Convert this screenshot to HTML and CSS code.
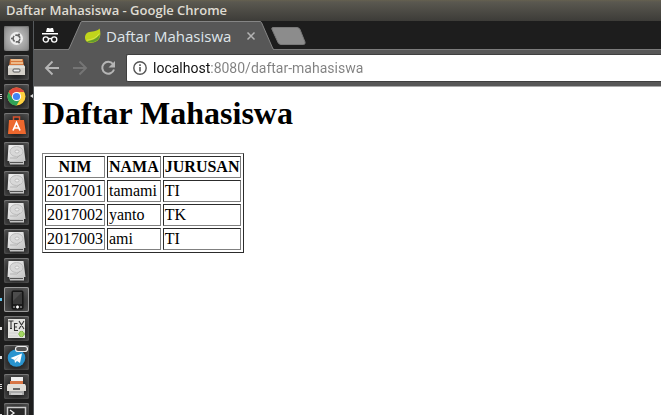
FILE: index.html
```html
<!DOCTYPE html>
<html lang="id">
<head>
<meta charset="utf-8">
<title>Daftar Mahasiswa</title>
<link rel="stylesheet" href="styles.css">
</head>
<body>
<svg class="defs" aria-hidden="true">
  <defs>
    <linearGradient id="metal" x1="0" y1="0" x2="1" y2="1"><stop offset="0" stop-color="#f2f2f2"/><stop offset="1" stop-color="#c4c4c4"/></linearGradient>
    <symbol id="disk" viewBox="0 0 25 25">
      <path d="M5 19h15v3.500H6z" fill="#c4c4c4"/><path d="M6 20.500h13" stroke="#555"/>
      <path d="M4.500 3h15l2 16H3.500z" fill="url(#metal)"/>
      <ellipse cx="12.500" cy="9.500" rx="6.500" ry="5" fill="#d8d8d8" stroke="#bebebe"/>
      <ellipse cx="13" cy="9.500" rx="2" ry="1.500" fill="#eee" stroke="#b0b0b0" stroke-width=".7"/>
      <path d="M6 16h7l3-3" fill="none" stroke="#b4b4b4"/>
    </symbol>
  </defs>
</svg>
<div class="desktop">
  <header class="titlebar">Daftar Mahasiswa - Google Chrome</header>
  <nav class="launcher" aria-label="Launcher">
    <button class="tile dash" aria-label="Dash"><svg viewBox="0 0 25 25"><circle cx="12.500" cy="12.500" r="6.500" fill="#eee"/><circle cx="12.500" cy="12.500" r="3.400" fill="none" stroke="#666" stroke-width="1.600" stroke-dasharray="6 1.120"/><g fill="#666"><circle cx="8" cy="12.500" r="1.100"/><circle cx="15" cy="8.500" r="1.100"/><circle cx="15" cy="16.500" r="1.100"/></g></svg></button>
    <button class="tile" aria-label="Files"><svg viewBox="0 0 25 25"><path d="M6 4h13l1 8H5z" fill="#d9783c"/><path d="M7 5h11M7 8h12" stroke="#f4d0a4" stroke-width="1.500"/><path d="M5 10h15l1 2v8H4v-8z" fill="#d4d0c9"/><path d="M4 12h17" stroke="#f5f3ee"/><rect x="9" y="14" width="7" height="3" rx="1" fill="#eee" stroke="#555"/></svg></button>
    <button class="tile run3 focused" aria-label="Google Chrome"><svg viewBox="0 0 25 25"><circle cx="12.500" cy="12.500" r="9" fill="#ffd140"/><path d="M4.700 8A9 9 0 0 1 20.300 8H12.500L8.600 14.750z" fill="#df4b3c"/><path d="M4.700 8A9 9 0 0 0 12.500 21.500L16.400 14.750H8.600z" fill="#30a257"/><circle cx="12.500" cy="12.500" r="4.600" fill="#fff"/><circle cx="12.500" cy="12.500" r="3.600" fill="#4285f4"/></svg></button>
    <button class="tile" aria-label="Software"><svg viewBox="0 0 25 25"><path d="M9.500 7V4h6v3" fill="none" stroke="#d8512c" stroke-width="1.500"/><path d="M5 7h15l2 14H4z" fill="#ed682e"/><path d="M9 17.500L12.500 9.500l3.500 8M10 15h5" fill="none" stroke="#fff" stroke-width="1.700"/></svg></button>
    <button class="tile" aria-label="Disk 1"><svg><use href="#disk"/></svg></button>
    <button class="tile" aria-label="Disk 2"><svg><use href="#disk"/></svg></button>
    <button class="tile" aria-label="Disk 3"><svg><use href="#disk"/></svg></button>
    <button class="tile" aria-label="Disk 4"><svg><use href="#disk"/></svg></button>
    <button class="tile" aria-label="Disk 5"><svg><use href="#disk"/></svg></button>
    <button class="tile phone run1" aria-label="Phone"><svg viewBox="0 0 25 25"><rect x="8" y="4" width="11" height="18" rx="1" fill="#1c1c1c" stroke="#111"/><path d="M9 5h9v12H9z" fill="#3a3a3a"/><path d="M9 5h9L9 14z" fill="#4c4c4c"/><path d="M9 20h2m5 0h2" stroke="#bbb"/><path d="M12 20h3M13.500 18.500v3" stroke="#fff" stroke-width="1.500"/></svg></button>
    <button class="tile run1" aria-label="TeX editor"><svg viewBox="0 0 25 25"><path d="M4 3h17v19H4z" fill="#e3e3e0"/><g fill="none" stroke="#333" stroke-width="1.100"><path d="M4.500 5h5M7 5v7M6 12.500h2M15 5l5 8M20 5l-5 8M13.500 7.500H10.500v7h3.500M10.500 11h2.500"/></g><path d="M5 17h9M5 20h9" stroke="#d0d0d0"/><circle cx="17.500" cy="18" r="2.700" fill="#a4d665" stroke="#6aaa28" stroke-dasharray="1.500 1"/></svg></button>
    <button class="tile run1" aria-label="Telegram"><svg viewBox="0 0 25 25"><circle cx="12.500" cy="13" r="8.800" fill="#2994cf"/><path d="M6.500 13L18 8.500 16 18l-3-2-2 2-.500-3z" fill="#fff"/><path d="M10.500 15l5-4.500-4 5z" fill="#b7d8ea"/><rect x="11.500" y="1.500" width="12" height="5" rx="2.500" fill="#555" stroke="#eee" stroke-width="1.200"/></svg></button>
    <button class="tile run3" aria-label="Archive"><svg viewBox="0 0 25 25"><path d="M7 3h12v8H7z" fill="#eee"/><path d="M6 7h13v4H6z" fill="#d87545"/><path d="M4 10h17l1 2v5H3v-5z" fill="#e1ded8"/><path d="M5 17h15v4H5z" fill="#aaa"/><rect x="9" y="14" width="7" height="2" fill="#666"/><path d="M7 20h11" stroke="#eee"/></svg></button>
    <button class="tile run1" aria-label="Terminal"><svg viewBox="0 0 25 25"><rect x="3.500" y="4.500" width="18" height="16" fill="#292929" stroke="#ccc" stroke-width="1.500"/><path d="M6 7l4 3-4 3M11 13h5" fill="none" stroke="#eee" stroke-width="1.300"/></svg></button>
  </nav>
  <div class="browser">
    <div class="tabstrip">
      <svg class="incognito" viewBox="0 0 18 18" aria-label="Incognito"><path d="M5 5L6 1h1.500l1.500.600L10.500 1H12l1 4zM1 6h16v1.500H1z" fill="#fff"/><g fill="none" stroke="#fff" stroke-width="1.300"><circle cx="4.800" cy="12.500" r="2.600"/><circle cx="13.200" cy="12.500" r="2.600"/><path d="M7.400 12q1.600-1 3.200 0"/></g></svg>
      <div class="tab">
        <svg class="tab-shape" viewBox="0 0 206 29" preserveAspectRatio="none" aria-hidden="true"><path d="M0 29L1 28L13 1Q13.500 .500 14 .500H192Q193 .500 193.500 1.500L205 28L206 29z" fill="#575757"/><path d="M0 28.500L1 28L13 1Q13.500 .500 14 .500H192Q193 .500 193.500 1.500L205 28L206 28.500" fill="none" stroke="#858585"/></svg>
        <svg class="leaf" viewBox="0 0 18 18" aria-hidden="true"><path d="M16.500 1.500C17.500 5 18 9 16 12.500C13.500 17 6 17.500 3 15.500C0 13 .500 7 4.500 5.500C8 4.300 14 5 16.500 1.500z" fill="#c0d51b"/><path d="M3 15C8 14.500 13 13 16.800 8C16.500 15.500 9 18 3 15z" fill="#639c2d"/><path d="M3 14C9 13.500 13.500 11 16 7" fill="none" stroke="#e0ea63" stroke-width=".7"/></svg>
        <span class="tab-title">Daftar Mahasiswa</span>
        <button class="close" aria-label="Close tab"><svg viewBox="0 0 10 10"><path d="M1.500 1.500l7 7m0-7l-7 7" stroke="#b4b4b4" stroke-width="1.500"/></svg></button>
      </div>
      <button class="new-tab" aria-label="New tab"><svg viewBox="0 0 35 18"><path d="M2 .500H26Q28 .500 29 2.500L34 15Q34.500 17.500 32.500 17.500H10Q8 17.500 7 15.500L.800 2Q.500.500 2 .500z" fill="#8c8c8c" stroke="#787878"/></svg></button>
    </div>
    <div class="toolbar">
      <button class="tool" aria-label="Back"><svg viewBox="0 0 16 16"><path d="M15 8H2M8.500 1.500L2 8l6.500 6.500" fill="none" stroke="#b5b5b5" stroke-width="1.900"/></svg></button>
      <button class="tool" aria-label="Forward" disabled><svg viewBox="0 0 16 16"><path d="M1 8H14M7.500 1.500L14 8l-6.500 6.500" fill="none" stroke="#757575" stroke-width="1.900"/></svg></button>
      <button class="tool" aria-label="Reload"><svg viewBox="0 0 16 16"><path d="M13 4A6 6 0 1 0 14 9.500" fill="none" stroke="#b5b5b5" stroke-width="2"/><path d="M15 1v6.500H8.500z" fill="#b5b5b5"/></svg></button>
      <label class="omnibox">
        <svg viewBox="0 0 14 14" aria-hidden="true"><circle cx="7" cy="7" r="6.200" fill="none" stroke="#555" stroke-width="1.400"/><path d="M7 6v4.500M7 3.300v1.600" stroke="#555" stroke-width="1.600"/></svg>
        <input class="url" type="text" aria-label="Address" value="localhost:8080/daftar-mahasiswa" spellcheck="false">
      </label>
    </div>
    <main class="page">
      <h1>Daftar Mahasiswa</h1>
      <table>
        <thead><tr><th>NIM</th><th>NAMA</th><th>JURUSAN</th></tr></thead>
        <tbody>
          <tr><td>2017001</td><td>tamami</td><td>TI</td></tr>
          <tr><td>2017002</td><td>yanto</td><td>TK</td></tr>
          <tr><td>2017003</td><td>ami</td><td>TI</td></tr>
        </tbody>
      </table>
    </main>
  </div>
</div>
</body>
</html>
```
FILE: styles.css
```css
* { box-sizing: border-box; }
body { margin: 0; font-family: "Open Sans", "Noto Sans", sans-serif; background: #1d1d1d; }
button { padding: 0; border: 0; background: none; }
svg { display: block; }
.defs { position: absolute; width: 0; height: 0; }

.desktop {
  display: grid;
  grid-template: auto 1fr / auto 1fr;
  height: 100vh;
  overflow: hidden;
}
.titlebar {
  grid-column: 1 / -1;
  padding: 0 6px;
  font-size: 13px;
  font-weight: 600;
  line-height: 21px;
  color: #dfdbd2;
  background: linear-gradient(#65614f, #5a5850 2px, #3d3c38);
}

.launcher {
  display: flex;
  flex-direction: column;
  gap: 4px;
  min-height: 0;
  padding: 5px 4px 0;
  overflow: hidden;
  background: #1d1d1d;
  border-right: 1px solid #55595c;
}
.tile {
  position: relative;
  flex: none;
  width: 25px;
  height: 25px;
  border-radius: 2px;
  background: radial-gradient(circle at 50% 60%, #222 30%, #555);
  box-shadow: inset 0 1px #777, inset 0 0 2px #666;
}
.tile svg { width: 25px; height: 25px; }
.dash { background: radial-gradient(circle, #bbb 25%, #858585); }
.phone {
  background: radial-gradient(circle at 50% 60%, #333 30%, #606060);
  box-shadow: inset 0 0 0 1px #999;
}
.run1::before, .run3::before {
  content: "";
  position: absolute;
  left: -4px;
  top: 11px;
  width: 2px;
  height: 3px;
  background: #ddd;
}
.run3::before {
  top: 10px;
  height: 5px;
  background: repeating-linear-gradient(#ddd 0 1px, transparent 1px 2px);
}
.phone::before { background: #62c4ec; }
.focused::after {
  content: "";
  position: absolute;
  right: -4px;
  top: 10px;
  border: solid transparent;
  border-width: 2px 3px 2px 0;
  border-right-color: #ddd;
}

.browser { display: flex; flex-direction: column; min-width: 0; min-height: 0; }
.tabstrip {
  display: flex;
  align-items: center;
  height: 29px;
  padding-left: 7px;
  background: linear-gradient(#1d1d1d 28px, #7b7b7b 28px);
}
.incognito { width: 18px; height: 18px; margin-right: 9px; }
.tab {
  position: relative;
  display: flex;
  align-items: center;
  width: 206px;
  height: 29px;
  padding: 0 18px 0 16px;
}
.tab-shape { position: absolute; inset: 0; width: 100%; height: 100%; }
.leaf { position: relative; width: 17px; height: 17px; margin-right: 5px; }
.tab-title { position: relative; flex: 1; font-size: 15px; line-height: 28px; color: #dfe5ea; white-space: nowrap; }
.close { position: relative; width: 10px; height: 10px; }
.new-tab { width: 35px; height: 18px; margin-left: -3px; }
.new-tab svg { width: 35px; height: 18px; }

.toolbar {
  display: flex;
  align-items: center;
  gap: 12px;
  height: 37px;
  padding-left: 10px;
  background: #575757;
  border-bottom: 1px solid #aaa;
}
.tool, .tool svg { width: 16px; height: 16px; }
.omnibox {
  display: flex;
  flex: 1;
  align-items: center;
  gap: 6px;
  height: 28px;
  margin-left: -2px;
  padding-left: 6px;
  background: #fff;
  border: 1px solid #3f3f3f;
  border-right: 0;
  border-radius: 2px 0 0 2px;
}
.omnibox svg { width: 14px; height: 14px; }
.url {
  flex: 1;
  min-width: 0;
  padding: 0;
  border: 0;
  outline: 0;
  font: 14px/20px Roboto, sans-serif;
  color: transparent;
  background: linear-gradient(90deg, #111 57px, #808080 57px) text;
}

.page {
  flex: 1;
  padding: 8px;
  font: 16px "Liberation Serif", serif;
  color: #000;
  background: #fff;
}
h1 { margin: 0 0 21px; font-size: 32px; line-height: 37px; }
table { border: 1px solid; border-color: #808080 #2c2c2c #2c2c2c #808080; border-spacing: 2px; }
th, td { padding: 1px; line-height: 18px; border: 1px solid; border-color: #2c2c2c #808080 #808080 #2c2c2c; }
```
